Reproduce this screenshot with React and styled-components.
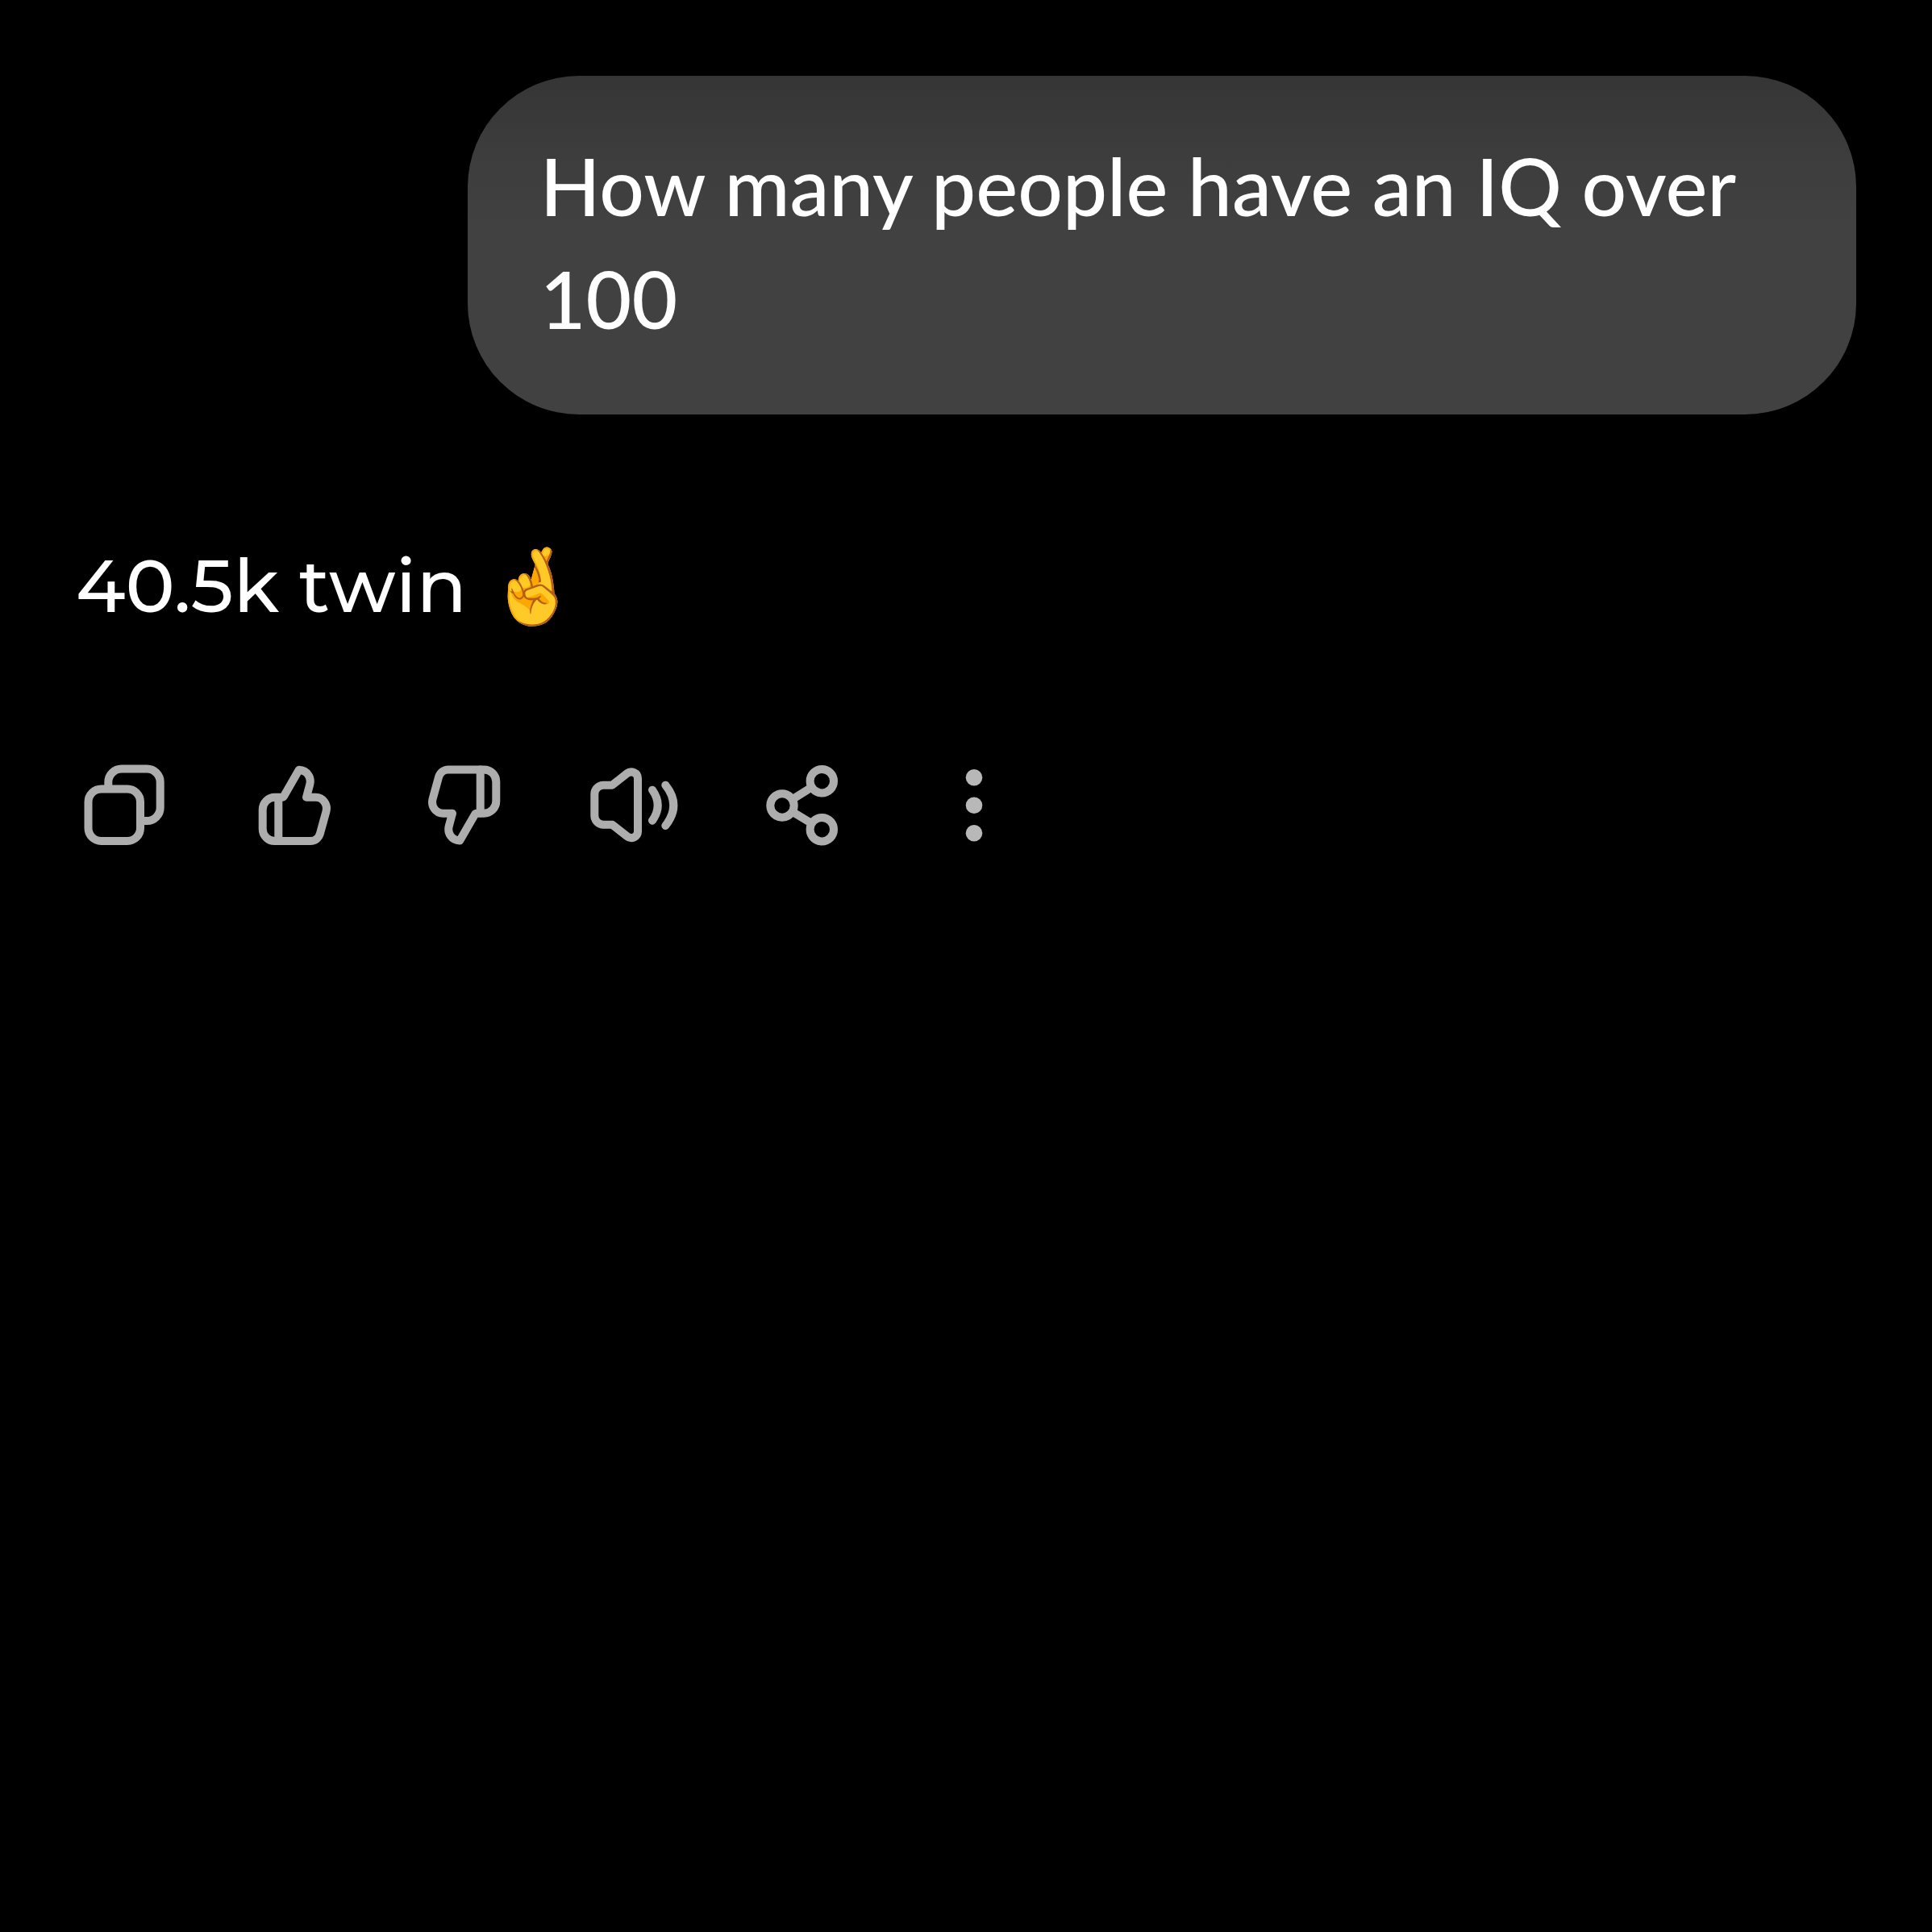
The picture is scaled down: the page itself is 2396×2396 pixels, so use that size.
import React from "react";
import styled, { createGlobalStyle } from "styled-components";

const GlobalStyle = createGlobalStyle`
  body {
    margin: 0;
    background: #000;
    color: #fff;
    font-family: Lato, sans-serif;
  }
`;

const Chat = styled.main`
  display: flex;
  flex-direction: column;
  padding: 94px;
`;

const UserMessage = styled.p`
  align-self: flex-end;
  box-sizing: border-box;
  width: 78%;
  margin: 0;
  padding: 66px 90px 74px;
  border-radius: 138px;
  background: linear-gradient(#353535, #3d3d3d 24%, #414141 45%);
  font-size: 98px;
  font-weight: 500;
  line-height: 140px;
`;

const Reply = styled.p`
  margin: 142px 0 0;
  font-family: Montserrat, Lato, sans-serif;
  font-size: 92px;
  font-weight: 500;
  line-height: 140px;
`;

const Actions = styled.div`
  display: flex;
  gap: 91px;
  margin-top: 142px;
`;

const ActionButton = styled.button`
  width: 120px;
  height: 120px;
  padding: 0;
  border: 0;
  background: none;
  color: #adadad;
  cursor: pointer;
`;

const Icon = styled.svg`
  display: block;
  width: 100%;
  height: 100%;
  fill: none;
  stroke: currentColor;
  stroke-width: 10;
  stroke-linecap: round;
  stroke-linejoin: round;
`;

const Thumb = () => (
  <>
    <path d="M45 50.7H36A15.3 15.3 0 0 0 20.7 66V90A15 15 0 0 0 35.7 105H80C86 105 90.5 101 92 95.5L99.3 69C102 59.5 95.5 50.7 86.5 50.7H75L79.2 35C81.5 26 76 17.5 65.8 16.8L47 49.5Q46.3 50.7 45 50.7Z" />
    <path d="M40.3 51V105" />
  </>
);

const actions = [
  {
    label: "Copy",
    icon: (
      <>
        <rect x="15.5" y="40.5" width="64.5" height="64.5" rx="16" />
        <path
          strokeLinecap="butt"
          d="M40.3 40V32A16.5 16.5 0 0 1 56.8 15.6H88.2A16.5 16.5 0 0 1 104.7 32V63.5A16.5 16.5 0 0 1 88.2 80H80"
        />
      </>
    ),
  },
  { label: "Good response", icon: <Thumb /> },
  {
    label: "Bad response",
    icon: (
      <g transform="rotate(180 60 60.7)">
        <Thumb />
      </g>
    ),
  },
  {
    label: "Read aloud",
    icon: (
      <>
        <path d="M32.3 35.7H21.5A11.2 11.2 0 0 0 10.3 47V73.5A11.2 11.2 0 0 0 21.5 84.7H32.3L50.5 99C56 103.5 64 100 64 93V27.4C64 20.5 56 17 50.5 21.3Z" />
        <path d="M82 41.7Q95.4 60.7 82 79.7M98.3 35.7Q118.3 60.7 98.3 86" />
      </>
    ),
  },
  {
    label: "Share",
    icon: (
      <>
        <circle cx="32" cy="61" r="14.7" />
        <circle cx="81.3" cy="30.7" r="14.7" />
        <circle cx="81.3" cy="90.7" r="14.7" />
        <path d="M46 52.5L67.5 39M46 69.5L67.5 82.5" />
      </>
    ),
  },
  {
    label: "More",
    icon: (
      <g fill="#b8b8b8" stroke="none">
        <circle cx="59" cy="26.3" r="10.3" />
        <circle cx="59" cy="60.7" r="10.3" />
        <circle cx="59" cy="95.2" r="10.3" />
      </g>
    ),
  },
];

const App = () => {
  return (
    <>
      <GlobalStyle />
      <Chat>
        <UserMessage>How many people have an IQ over 100</UserMessage>
        <Reply>40.5k twin 🤞</Reply>
        <Actions>
          {actions.map((it) => (
            <ActionButton key={it.label} type="button" aria-label={it.label}>
              <Icon viewBox="0 0 120 120">{it.icon}</Icon>
            </ActionButton>
          ))}
        </Actions>
      </Chat>
    </>
  );
};

export default App;
